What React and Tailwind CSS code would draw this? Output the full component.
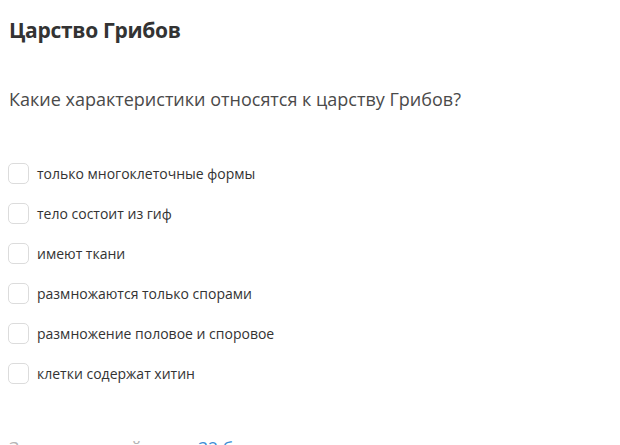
const options = [
  'только многоклеточные формы',
  'тело состоит из гиф',
  'имеют ткани',
  'размножаются только спорами',
  'размножение половое и споровое',
  'клетки содержат хитин',
];

export default function App() {
  return (
    <div className="h-[445px] w-[620px] overflow-hidden bg-white px-[9px] pt-[15px] font-['Open_Sans',sans-serif]">
      <h1 className="text-[21px] font-bold leading-[30px] tracking-[-0.3px] text-[#333]">Царство Грибов</h1>

      <p className="mt-[41px] text-[18px] leading-[26px] text-[#4a4a4a]">
        Какие характеристики относятся к царству Грибов?
      </p>

      <ul className="mt-[51px] flex flex-col gap-[19px]">
        {options.map((text) => (
          <li key={text} className="flex h-[21px] items-center gap-[8px]">
            <span className="-ml-px h-[21px] w-[21px] shrink-0 rounded-[5px] border border-[#dcdcdc] bg-white" />
            <span className="text-[14px] text-[#333]">{text}</span>
          </li>
        ))}
      </ul>

      <p className="mt-[51px] text-[17.5px] leading-[26px] text-[#b5b5b5]">
        За правильный ответ <span className="text-[#3d8fd6]">32 балла</span>
      </p>
    </div>
  );
}
